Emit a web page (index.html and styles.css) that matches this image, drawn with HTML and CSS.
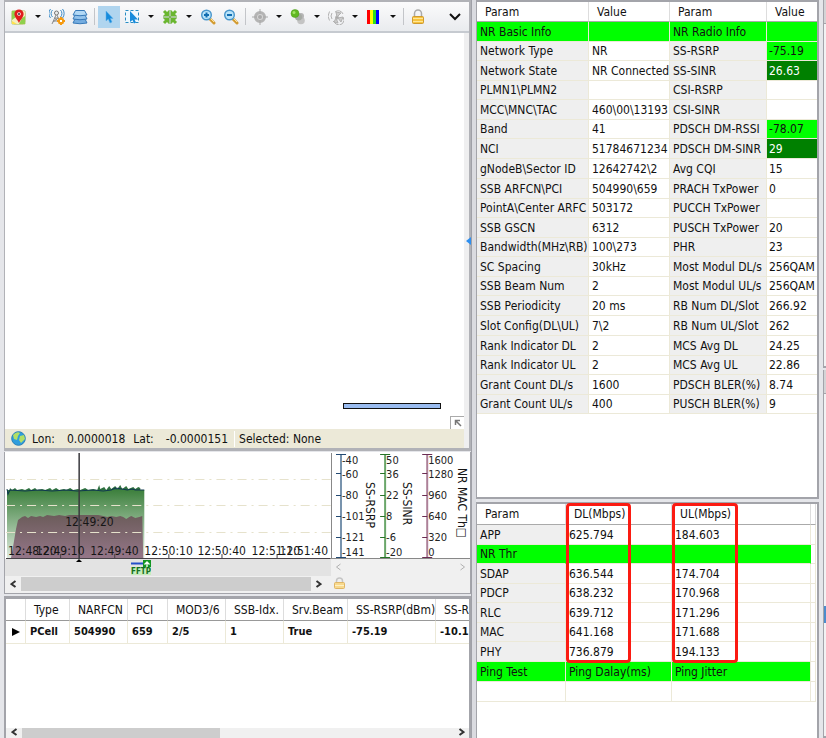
FILE: index.html
```html
<!DOCTYPE html>
<html lang="en">
<head>
<meta charset="utf-8">
<title>NR Drive Test</title>
<link rel="stylesheet" href="styles.css">
</head>
<body>
<div class="workspace">
  <main class="column">
    <section class="panel map">
      <div class="toolbar">
        <button class="tool" aria-label="Map"><svg width="16" height="16" viewBox="0 0 16 16"><rect x=".5" y="1.5" width="14" height="14" rx="2" fill="#f5edc0" stroke="#c9d49a"/><path d="M1 2h5l-1 6-4 3z" fill="#8fd04c"/><path d="M11 9l3-2v8H8z" fill="#8fd04c"/><path d="M1 12l5 3H1z" fill="#ffe24d"/><path d="M8 14C6 10 3.400 8 3.400 5a4.600 4.600 0 019.200 0C12.600 8 10 10 8 14z" fill="#e01c1c"/><circle cx="8" cy="5" r="1.800" fill="#fff"/><circle cx="8" cy="5" r="1" fill="#333"/></svg></button>
        <button class="caret" aria-label="Map options"></button>
        <button class="tool" aria-label="Sites"><svg width="16" height="16" viewBox="0 0 16 16" fill="none"><path d="M3.500 1a5 5 0 000 7M1.500 0a7 7 0 000 9M11.500 1a5 5 0 010 7M13.500 0a7 7 0 010 9" stroke="#3b8bc8"/><circle cx="7.500" cy="4" r="2" fill="#eee" stroke="#777"/><path d="M7 6L3 15M8 6l3 7M5.500 9h4M4.500 12h6M5.500 9l5 4M9 9l-5 4" stroke="#8c8c8c"/><path d="M12 8v8M8 12h8M9.500 9.500l5 5M14.500 9.500l-5 5" stroke="#f59a10" stroke-width="2"/><rect x="11" y="11" width="2" height="2" fill="#fff"/></svg></button>
        <button class="tool" aria-label="Layers"><svg width="16" height="16" viewBox="0 0 16 16" stroke="#3779b8" fill="#75ade0"><path d="M3 10h10l2 4q-7 1.500-14 0z"/><path d="M3 6h10l2 4q-7 1.500-14 0z" fill="#92c2eb"/><path d="M3.500 1.500h9L15 6q-7 1.500-14 0z" fill="#b2d8f5"/></svg></button>
        <span class="divider"></span>
        <button class="tool active" aria-label="Pointer"><svg width="16" height="16" viewBox="0 0 16 16"><path d="M5 2v10l2.300-2 1.700 4 2-1-1.700-3.500H12z" fill="#168bdc" stroke="#5caee8" stroke-width=".5"/></svg></button>
        <button class="tool" aria-label="Area select"><svg width="16" height="16" viewBox="0 0 16 16"><rect x="1.500" y="1.500" width="13" height="12" fill="#eef8fe" stroke="#268bc2" stroke-dasharray="3 2"/><path d="M6 2v11l2.500-2 1.500 3.500 2-1-1.500-3H14z" fill="#168bdc"/></svg></button>
        <button class="caret" aria-label="Select options"></button>
        <button class="tool" aria-label="Fit"><svg width="16" height="16" viewBox="0 0 16 16"><path d="M8 1v14M1 8h14" stroke="#559c2a"/><path d="M2 2l4 4M14 2l-4 4M2 14l4-4M14 14l-4-4" stroke="#69b62f" stroke-width="3"/><path d="M7 1v6H1zM9 1v6h6zM7 15V9H1zM9 15V9h6z" fill="#69b62f"/></svg></button>
        <button class="caret" aria-label="Fit options"></button>
        <button class="tool" aria-label="Zoom in"><svg width="16" height="16" viewBox="0 0 16 16"><path d="M9 9l5 5" stroke="#d29b32" stroke-width="3" stroke-linecap="round"/><path d="M10 9l4 4" stroke="#ffe59a"/><circle cx="6.500" cy="6" r="4.800" fill="#b9e4fa" stroke="#4795cb" stroke-width="1.400"/><path d="M4 6h5M6.500 3.500v5" stroke="#116db1" stroke-width="2"/></svg></button>
        <button class="tool" aria-label="Zoom out"><svg width="16" height="16" viewBox="0 0 16 16"><path d="M9 9l5 5" stroke="#d29b32" stroke-width="3" stroke-linecap="round"/><path d="M10 9l4 4" stroke="#ffe59a"/><circle cx="6.500" cy="6" r="4.800" fill="#b9e4fa" stroke="#4795cb" stroke-width="1.400"/><path d="M4 6h5" stroke="#116db1" stroke-width="2"/></svg></button>
        <span class="divider"></span>
        <button class="tool" aria-label="Locate"><svg width="16" height="16" viewBox="0 0 16 16"><circle cx="8" cy="8" r="4.500" fill="#d6d6d6" stroke="#b4b4b4" stroke-width="3"/><circle cx="8" cy="8" r="2" fill="#aaa"/><path d="M8 0v5M8 11v5M0 8h5M11 8h5" stroke="#aaa"/></svg></button>
        <button class="caret" aria-label="Locate options"></button>
        <button class="tool" aria-label="Track"><svg width="16" height="16" viewBox="0 0 16 16"><circle cx="11" cy="11.500" r="3.800" fill="#c4c4c4"/><circle cx="11" cy="7" r="3" fill="#b5b5b5"/><circle cx="8.500" cy="8" r="3.500" fill="#a5aaa3"/><circle cx="5" cy="4.500" r="4" fill="#61b822" stroke="#4d9b1a" stroke-width=".5"/><circle cx="4" cy="3.500" r="1.500" fill="#a1e463"/></svg></button>
        <button class="caret" aria-label="Track options"></button>
        <button class="tool" aria-label="Coverage"><svg width="16" height="16" viewBox="0 0 16 16" fill="none" stroke="#b2b2b2"><path d="M4 4q-2 3 0 6M1.500 2.500q-3 5 0 9M7 3a5 5 0 018 2M15 8a5 5 0 01-7 7M5 12l3 3"/><circle cx="9" cy="8.500" r="1.500" fill="#aaa"/><path d="M9 8L8 3l5 1zM10 9l5-1-2 5zM8 9l-2 4 4 1z" fill="#ccc"/></svg></button>
        <button class="caret" aria-label="Coverage options"></button>
        <button class="tool" aria-label="Legend"><svg width="16" height="16" viewBox="0 0 16 16"><path fill="red" d="M1 1h3v14H1z"/><path fill="#ff0" d="M4 1h3v14H4z"/><path fill="#2ddc20" d="M7 1h3v14H7z"/><path fill="#00f" d="M10 1h3v14h-3z"/></svg></button>
        <button class="caret" aria-label="Legend options"></button>
        <span class="divider"></span>
        <button class="tool" aria-label="Lock"><svg width="16" height="16" viewBox="0 0 16 16"><path d="M4.500 8V4.500a3.500 3.500 0 017 0V8" fill="none" stroke="#aaa" stroke-width="1.500"/><rect x="2.500" y="7.500" width="11" height="7" rx="1" fill="#f7c440" stroke="#cf9a30"/><path d="M3 9.500h10M3 12.500h10" stroke="#ffe698"/></svg></button>
        <button class="tool more" aria-label="More"><svg width="16" height="16" viewBox="0 0 16 16"><path d="M3 5l5 5 5-5" fill="none" stroke="#111" stroke-width="2"/></svg></button>
      </div>
      <div class="canvas">
        <span class="scale"></span>
        <button class="corner" aria-label="Overview"><svg width="8" height="8" viewBox="0 0 8 8"><path d="M1.500 6V1.500H6M2 2l5 5" fill="none" stroke="#777" stroke-width="1.500"/></svg></button>
      </div>
      <div class="status">
        <svg width="15" height="15" viewBox="0 0 15 15"><circle cx="7.500" cy="7.500" r="6.800" fill="#2e9ddd" stroke="#287fb7"/><path d="M2 4q4-4 7-2L7 5 6 9 3 8zM9 5l4-1 1 4-4 4-2-3z" fill="#b2df65"/></svg>
        <span>Lon:</span><span class="lon">0.0000018</span><span>Lat:</span><span class="lat">-0.0000151</span><span class="selected">Selected: None</span>
      </div>
    </section>

    <section class="panel chart">
      <div class="plots">
        <svg class="plot" viewBox="0 0 324 107" preserveAspectRatio="none">
          <defs>
            <linearGradient id="rsrp" x2="0" y2="1"><stop stop-color="#3d803d"/><stop offset="1" stop-color="#e0ebe0"/></linearGradient>
            <linearGradient id="thr" x2="0" y2="1"><stop stop-color="#6c5c5b"/><stop offset="1" stop-color="#96778a"/></linearGradient>
          </defs>
          <path d="M1 106V38h137v68z" fill="url(#rsrp)"/>
          <path d="M5 106l2-11 3-18 2-9 4-3 3-1 3 2 3-2 5 1 4-1 3 1 4-2 7 1 5-1 6 1 4-1h29l5 1 4 1 4-1 5 1 4-1 3 1 3 2 3-2 2-1 4 2 4-1 3-1 1 44z" fill="url(#thr)"/>
          <path d="M1 36v5l1 3 2-8 2 2 3-2 2 2 5-1 3 1 4-2 2 2 4-2 2 2 5-1 3 1 5-2 2 2 4-2 3 2 5-1 2 1 4-2 3 2 5-1 2 1 5-2 3 2 5-1 4 1 2-5 1 4 4-2 2 3 3-4 2 3 4-3 2 3 3-4 2 4 4-3 2 3 5-2 2 2 3-2 2 1v2H1z" fill="#2e7040"/>
          <path d="M1 37l1 5 2-4 15 1 14-1 13 1 14-1 11 1 16-1 10 1 8-1 4-2 7 1 5 1 5-1 3 1h9" fill="none" stroke="#10394f"/>
          <g stroke="#e6e2cc" stroke-dasharray="9 5 2 5"><path d="M0 27.500h324M0 53.500h324M0 80.500h324"/></g>
          <path d="M0 106.500h324M54.500 102v4M108.500 102v4M162.500 102v4M215.500 102v4M270.500 102v4" stroke="#484248"/>
          <path d="M73 1v106" stroke="#39393d" stroke-width="1.500"/>
          <g class="label"><text x="59" y="74">12:49:20</text><text x="2" y="103">12:48:20</text><text x="30" y="103">12:49:10</text><text x="84" y="103">12:49:40</text><text x="138" y="103">12:50:10</text><text x="191" y="103">12:50:40</text><text x="245" y="103">12:51:10</text><text x="273" y="103">12:51:40</text></g>
        </svg>
        <svg class="axes" viewBox="0 0 139 107" preserveAspectRatio="none">
          <path d="M.500 1v105.500H139" fill="none" stroke="#888"/>
          <g fill="none">
            <path d="M10 3v103" stroke="#7893ad" stroke-width="2"/><path d="M5 2.500h10M5 21.500h5M5 43.500h5M5 64.500h5M5 85.500h5M5 105.500h10" stroke="#234a73"/>
            <path d="M54 3v103" stroke="#6aa66a" stroke-width="2"/><path d="M49 2.500h10M49 21.500h5M49 43.500h5M49 64.500h5M49 85.500h5M49 105.500h10" stroke="#267326"/>
            <path d="M96 3v103" stroke="#ad8098" stroke-width="2"/><path d="M91 2.500h10M91 21.500h5M91 43.500h5M91 64.500h5M91 85.500h5M91 105.500h10" stroke="#6b2d52"/>
          </g>
          <g class="tick"><text x="11" y="12">-40</text><text x="11" y="26">-60</text><text x="11" y="47">-80</text><text x="11" y="68">-101</text><text x="11" y="89">-121</text><text x="11" y="104">-141</text>
          <text x="55" y="12">50</text><text x="55" y="26">36</text><text x="55" y="47">22</text><text x="55" y="68">8</text><text x="55" y="89">-6</text><text x="55" y="104">-20</text>
          <text x="97" y="12">1600</text><text x="97" y="26">1280</text><text x="97" y="47">960</text><text x="97" y="68">640</text><text x="97" y="89">320</text><text x="97" y="104">0</text></g>
          <g class="label"><text transform="translate(35 30) rotate(90)">SS-RSRP</text><text transform="translate(72 30) rotate(90)">SS-SINR</text><text transform="translate(127 16) rotate(90)">NR MAC Th□</text></g>
        </svg>
      </div>
      <div class="events">
        <div class="lane"><svg class="cursor" width="6" height="3" viewBox="0 0 6 3"><path d="M0 3l3-3 3 3z"/></svg><svg class="ftp" width="20" height="15" viewBox="0 0 20 15"><path fill="#c7edbb" d="M0 7h20v8H0z"/><path d="M0 3.500h12" stroke="#2450c9" stroke-width="2"/><path fill="#149523" d="M12 0h8v7h-8z"/><path d="M16 7V2M13.500 4.500L16 2l2.500 2.500" stroke="#fff" stroke-width="1.300" fill="none"/><text x="0" y="14" class="tiny">FFTP</text></svg></div>
        <div class="scroll dim"><button aria-label="Axes left"><svg width="7" height="8" viewBox="0 0 7 8"><path d="M5.500 1l-4 3 4 3"/></svg></button><span class="track"></span><button aria-label="Axes right"><svg width="7" height="8" viewBox="0 0 7 8"><path d="M1.500 1l4 3-4 3"/></svg></button></div>
      </div>
      <div class="events">
        <div class="scroll time"><button aria-label="Earlier"><svg width="7" height="8" viewBox="0 0 7 8"><path d="M5.500 1l-4 3 4 3"/></svg></button><span class="track"><span class="thumb"></span></span><button aria-label="Later"><svg width="7" height="8" viewBox="0 0 7 8"><path d="M1.500 1l4 3-4 3"/></svg></button></div>
        <div class="lockbar"><svg width="13" height="13" viewBox="0 0 13 13"><path d="M3.500 6V4a3 3 0 016 0v2" fill="none" stroke="#c5c5c5" stroke-width="1.500"/><rect x="1.500" y="5.500" width="10" height="6" rx="1" fill="#f8d98d" stroke="#dfb565"/><path d="M2 8.500h9" stroke="#fff1c5"/></svg></div>
      </div>
    </section>

    <section class="panel cells">
      <div class="grid-wrap">
        <table class="cell-table">
          <colgroup><col class="c20"><col class="c44"><col class="c58"><col class="c40"><col class="c58"><col class="c58"><col class="c64"><col class="c88"><col></colgroup>
          <thead><tr><th></th><th>Type</th><th>NARFCN</th><th>PCI</th><th>MOD3/6</th><th>SSB-Idx.</th><th>Srv.Beam</th><th>SS-RSRP(dBm)</th><th>SS-R</th></tr></thead>
          <tbody><tr><td><span class="marker"></span></td><td>PCell</td><td>504990</td><td>659</td><td>2/5</td><td>1</td><td>True</td><td>-75.19</td><td>-10.1</td></tr></tbody>
        </table>
      </div>
      <div class="scroll cellbar"><button aria-label="Columns left"><svg width="7" height="8" viewBox="0 0 7 8"><path d="M5.500 1l-4 3 4 3"/></svg></button><span class="track"><span class="thumb part"></span></span><button aria-label="Columns right"><svg width="7" height="8" viewBox="0 0 7 8"><path d="M1.500 1l4 3-4 3"/></svg></button></div>
    </section>
  </main>

  <div class="splitter"><span class="collapse"></span></div>

  <aside class="column side">
    <section class="panel info">
      <table class="params">
        <colgroup><col class="c112"><col class="c81"><col class="c97"><col></colgroup>
        <thead><tr><th>Param</th><th>Value</th><th>Param</th><th>Value</th></tr></thead>
        <tbody>
          <tr class="group"><td>NR Basic Info</td><td></td><td>NR Radio Info</td><td></td></tr>
          <tr><td>Network Type</td><td>NR</td><td>SS-RSRP</td><td class="good">-75.19</td></tr>
          <tr><td>Network State</td><td>NR Connected</td><td>SS-SINR</td><td class="best">26.63</td></tr>
          <tr><td>PLMN1\PLMN2</td><td></td><td>CSI-RSRP</td><td></td></tr>
          <tr><td>MCC\MNC\TAC</td><td>460\00\13193</td><td>CSI-SINR</td><td></td></tr>
          <tr><td>Band</td><td>41</td><td>PDSCH DM-RSSI</td><td class="good">-78.07</td></tr>
          <tr><td>NCI</td><td>51784671234</td><td>PDSCH DM-SINR</td><td class="best">29</td></tr>
          <tr><td>gNodeB\Sector ID</td><td>12642742\2</td><td>Avg CQI</td><td>15</td></tr>
          <tr><td>SSB ARFCN\PCI</td><td>504990\659</td><td>PRACH TxPower</td><td>0</td></tr>
          <tr><td>PointA\Center ARFC</td><td>503172</td><td>PUCCH TxPower</td><td></td></tr>
          <tr><td>SSB GSCN</td><td>6312</td><td>PUSCH TxPower</td><td>20</td></tr>
          <tr><td>Bandwidth(MHz\RB)</td><td>100\273</td><td>PHR</td><td>23</td></tr>
          <tr><td>SC Spacing</td><td>30kHz</td><td>Most Modul DL/s</td><td>256QAM</td></tr>
          <tr><td>SSB Beam Num</td><td>2</td><td>Most Modul UL/s</td><td>256QAM</td></tr>
          <tr><td>SSB Periodicity</td><td>20 ms</td><td>RB Num DL/Slot</td><td>266.92</td></tr>
          <tr><td>Slot Config(DL\UL)</td><td>7\2</td><td>RB Num UL/Slot</td><td>262</td></tr>
          <tr><td>Rank Indicator DL</td><td>2</td><td>MCS Avg DL</td><td>24.25</td></tr>
          <tr><td>Rank Indicator UL</td><td>2</td><td>MCS Avg UL</td><td>22.86</td></tr>
          <tr><td>Grant Count DL/s</td><td>1600</td><td>PDSCH BLER(%)</td><td>8.74</td></tr>
          <tr><td>Grant Count UL/s</td><td>400</td><td>PUSCH BLER(%)</td><td>9</td></tr>
        </tbody>
      </table>
    </section>
    <section class="panel rates">
      <table class="params thr">
        <colgroup><col class="c89"><col class="c106"><col><col class="c5"></colgroup>
        <thead><tr><th>Param</th><th>DL(Mbps)</th><th>UL(Mbps)</th><th></th></tr></thead>
        <tbody>
          <tr><td>APP</td><td>625.794</td><td>184.603</td><td></td></tr>
          <tr class="group solid"><td>NR Thr</td><td></td><td></td><td></td></tr>
          <tr><td>SDAP</td><td>636.544</td><td>174.704</td><td></td></tr>
          <tr><td>PDCP</td><td>638.232</td><td>170.968</td><td></td></tr>
          <tr><td>RLC</td><td>639.712</td><td>171.296</td><td></td></tr>
          <tr><td>MAC</td><td>641.168</td><td>171.688</td><td></td></tr>
          <tr><td>PHY</td><td>736.879</td><td>194.133</td><td></td></tr>
          <tr class="group"><td>Ping Test</td><td>Ping Dalay(ms)</td><td>Ping Jitter</td><td></td></tr>
          <tr class="blank"><td></td><td></td><td></td><td></td></tr>
        </tbody>
      </table>
      <span class="mark dl"></span><span class="mark ul"></span>
    </section>
  </aside>
  <div class="rail"><div class="dock"><span class="tab"></span></div><div class="dock low"><span class="tab"></span><span class="tab blue"></span></div></div>
</div>
</body>
</html>
```
FILE: styles.css
```css
* { box-sizing: border-box; }

body {
  margin: 0;
  height: 100vh;
  overflow: hidden;
  background: #e5e6ea;
  color: #111;
  font: 12px/16px "DejaVu Sans Condensed", "DejaVu Sans", sans-serif;
}

button { padding: 0; border: 0; background: none; }

.workspace {
  display: grid;
  grid-template-columns: 467fr 5px 343fr 7px;
  height: 100vh;
  padding-left: 4px;
}

.column { display: flex; flex-direction: column; min-width: 0; min-height: 0; }

.panel { position: relative; background: #fff; border: 1px solid #a3a4aa; }

/* Map */
.map {
  flex: 1;
  display: flex;
  flex-direction: column;
  min-height: 0;
  border-width: 2px 2px 3px 1px;
  border-color: #b1b2b7;
}

.toolbar {
  display: flex;
  align-items: center;
  gap: 1px;
  height: 31px;
  padding: 0 3px;
  background: linear-gradient(#fbfbfc, #e9ebee);
  border-bottom: 2px solid #c6cad0;
}

.tool { display: flex; align-items: center; justify-content: center; width: 22px; height: 22px; }
.tool.active { background: #b0d5ef; }
.tool.more { margin-left: auto; }
.caret { display: flex; justify-content: center; width: 14px; }
.caret::before { content: ""; border: 3px solid transparent; border-top-color: #111; border-bottom: 0; }
.divider { width: 1px; height: 17px; margin: 0 2px; background: #c3c5c9; }

.canvas { position: relative; flex: 1; border-right: 5px solid #efeff0; }
.scale { position: absolute; right: 23px; bottom: 20px; width: 98px; height: 6px; background: #9abcf0; border: 1px solid #111; }
.corner { position: absolute; right: 0; bottom: 0; display: grid; place-items: center; width: 14px; height: 13px; background: #fff; border: 1px solid #aaa; border-width: 1px 0 0 1px; }

.status {
  display: flex;
  align-items: center;
  height: 19px;
  padding-left: 6px;
  background: #ece9d8;
  border-right: 5px solid #efeff0;
}
.status svg { margin-right: 6px; }
.lon { margin: 0 8px 0 12px; }
.lat { margin: 0 6px 0 12px; }
.selected { padding-left: 4px; border-left: 1px solid #fff; }

/* Chart */
.chart { margin-top: 1px; border-top: 0; background: #f0f0f0; }
.plots { display: flex; height: 107px; padding-left: 1px; background: #fff; }
.plot { flex: 324; min-width: 0; height: 107px; }
.axes { flex: 139; min-width: 0; height: 107px; overflow: hidden; }
.label { font-size: 12px; fill: #161616; }
.tick { font-size: 11px; fill: #222; }
.tiny { font-size: 8px; font-weight: bold; fill: #147020; }

.events { display: flex; height: 17px; }
.events > :first-child { flex: 325; min-width: 0; }
.events > :last-child { flex: 139; min-width: 0; }
.lane { display: flex; background: #e3e3e3; }
.cursor { margin-left: 71px; }
.ftp { margin: 1px 0 0 49px; }
.scroll { display: flex; align-items: center; height: 16px; background: #f0f0f0; }
.scroll button { display: grid; place-items: center; width: 16px; }
.scroll path { fill: none; stroke: #333; stroke-width: 2; }
.scroll.dim path { stroke: #b1b1b1; stroke-width: 1; }
.track { display: block; flex: 1; height: 14px; }
.thumb { display: block; height: 14px; background: #cdcdcd; }
.part { width: 46%; }
.lockbar { padding: 1px 0 0 6px; }

/* Cell list */
.cells {
  display: flex;
  flex-direction: column;
  height: 142px;
  margin-top: 2px;
  border-width: 3px 2px 0 2px;
}
.grid-wrap { flex: 1; overflow: hidden; }
.cell-table { width: 100%; border-collapse: separate; border-spacing: 0; table-layout: fixed; white-space: nowrap; }
.cell-table th { height: 22px; padding: 0 0 0 8px; font-weight: normal; text-align: left; border: 1px solid #ddd; border-width: 0 1px 1px 0; border-bottom-color: #999; }
.cell-table td { height: 23px; padding: 0 0 0 4px; font-size: 11px; font-weight: bold; border: 1px solid #ece9d8; border-width: 0 1px 1px 0; }
.cell-table th:last-child, .cell-table td:last-child { border-right: 0; }
.marker { display: block; width: 0; margin-left: 2px; border: 4px solid transparent; border-left: 8px solid #000; border-right: 0; }
.c20 { width: 20px; }
.c40 { width: 40px; }
.c44 { width: 44px; }
.c58 { width: 58px; }
.c64 { width: 64px; }
.c88 { width: 88px; }
.cellbar { height: 10px; overflow: hidden; align-items: flex-start; }

/* Splitter */
.splitter { display: flex; align-items: center; border-left: 1px solid #9fa0a7; background: #dadbe0; }
.collapse { position: relative; right: 6px; bottom: 128px; border: 4px solid transparent; border-right: 5px solid #2e8ff0; border-left: 0; }

/* Parameter tables */
.info { flex: 1; min-height: 0; border-width: 2px 2px 2px 1px; }
.rates { height: 236px; margin-top: 3px; border-width: 2px 2px 0 1px; }

.params { width: 100%; border-collapse: separate; border-spacing: 0; table-layout: fixed; white-space: nowrap; }
.params th { height: 20px; padding: 0 0 0 8px; font-weight: normal; text-align: left; border-right: 1px solid #ddd; border-bottom: 1px solid #aaa; }
.params td { height: 20px; padding: 0 0 0 3px; border-right: 1px solid #ece9d8; border-bottom: 1px solid #ece9d8; }
.params tr:nth-child(even) td { height: 19px; }
.params tr:nth-child(8n) td { height: 20px; }
.params td:first-child, .info td:nth-child(3) { background: #efefef; }
.params .group td { background: #0f0; }
.info td:last-child, .info th:last-child { border-right: 0; }
.params td:last-child { padding-left: 2px; }
.params .good { background: #0f0; }
.params .best { background: #008000; color: #fff; }
.c112 { width: 112px; }
.c81 { width: 81px; }
.c97 { width: 97px; }

.thr { width: calc(100% - 1px); }
.thr th { height: 21px; }
.c89 { width: 89px; }
.c106 { width: 106px; }
.c5 { width: 5px; }
.thr th:last-child, .thr td:last-child { padding: 0; }
.rates .group td:last-child, .rates .blank td { background: #fff; }
.rates .solid td { border-right-color: #0f0; }
.rates .solid td:last-child { border-right-color: #ece9d8; }

.mark { position: absolute; top: -1px; height: 160px; border: 3px solid #fb1b12; border-radius: 4px; }
.dl { left: 89px; width: 65px; }
.ul { left: 195px; width: 66px; }

/* Right dock */
.rail { display: flex; flex-direction: column; padding-left: 4px; }
.dock { flex: 1; background: #f2f2f3; border-left: 1px solid #a3a4aa; border-bottom: 2px solid #a3a4aa; }
.low { margin-top: 2px; }
.tab { display: block; height: 24px; background: #d4d4d6; border-bottom: 1px solid #a3a4aa; }
.blue { height: 17px; margin-top: 212px; background: #4c8ccc; border: 0; }
```
